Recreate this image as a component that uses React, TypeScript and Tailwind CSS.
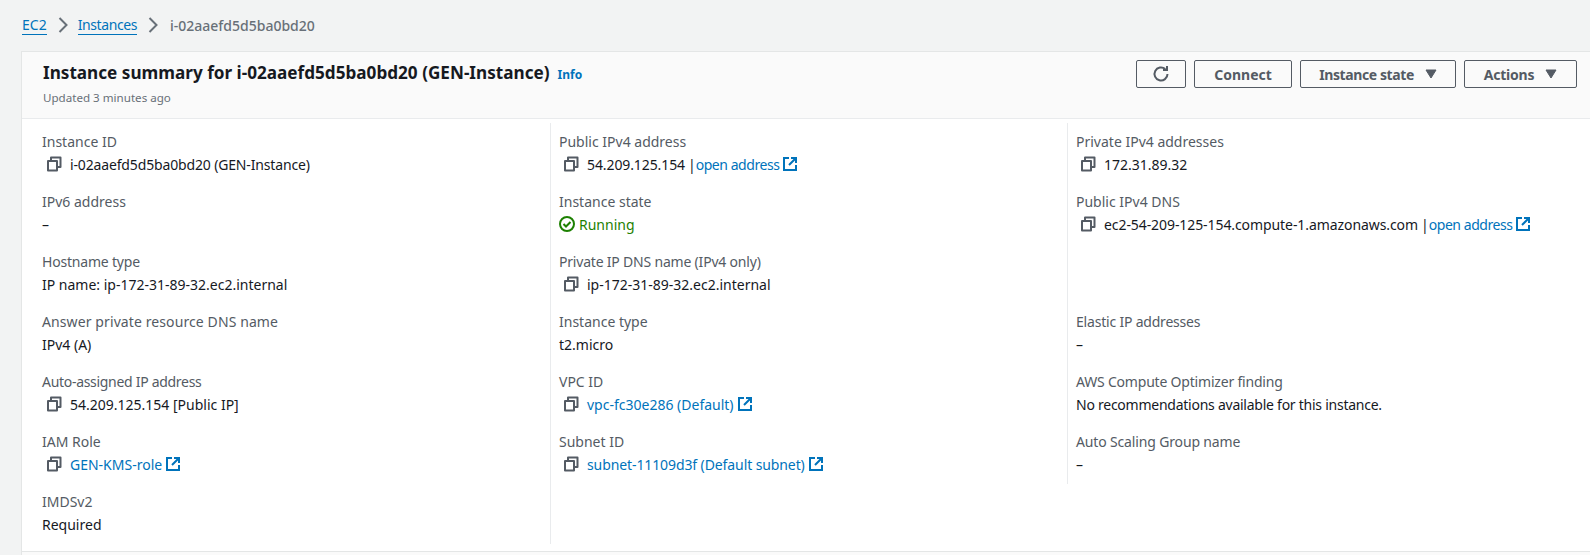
import React from "react";

const Copy = () => (
  <svg width="16" height="16" viewBox="0 0 16 16" fill="none" stroke="#545b64" strokeWidth="2" className="shrink-0">
    <path d="M2 5h9v9.500H2z" strokeLinejoin="round" />
    <path d="M5 4.500V1.500h9.500v9.500H11.500" strokeLinejoin="round" />
  </svg>
);

const Ext = () => (
  <svg width="14" height="14" viewBox="0 0 14 14" fill="none" stroke="#0073bb" strokeWidth="2" className="shrink-0 ml-[4px]">
    <path d="M6 1H1v12h12V8" />
    <path d="M8 1h5v5M13 1 6 8" />
  </svg>
);

const Tri = () => (
  <svg width="12" height="10" viewBox="0 0 12 10" className="shrink-0">
    <path d="M1 1h10L6 9z" fill="#545b64" stroke="#545b64" strokeLinejoin="round" />
  </svg>
);

const Check = () => (
  <svg width="16" height="16" viewBox="0 0 16 16" fill="none" stroke="#1d8102" strokeWidth="2" className="shrink-0">
    <circle cx="8" cy="8" r="7" />
    <path d="m4.500 8 2.500 2.500 4.500-4.500" />
  </svg>
);

const Chevron = () => (
  <svg width="10" height="16" viewBox="0 0 10 16" fill="none" stroke="#687078" strokeWidth="2" className="shrink-0">
    <path d="m1.500 1 7 7-7 7" />
  </svg>
);

type ValueProps = { copy?: boolean; className?: string; children: React.ReactNode };
const Value = ({ copy, className = "", children }: ValueProps) => (
  <div className={`flex items-center h-[22px] whitespace-nowrap ${copy ? "pl-[4px]" : ""} ${className}`}>
    {copy && <span className="mr-[8px] flex"><Copy /></span>}
    {children}
  </div>
);

type FieldProps = { label: string; labelClass?: string; children?: React.ReactNode };
const Field = ({ label, labelClass = "", children }: FieldProps) => (
  <div className="h-[60px] pt-[1px]">
    <div className={`h-[22px] leading-[22px] text-[#545b64] ${labelClass}`}>{label}</div>
    {children}
  </div>
);

const A = ({ children, className = "" }: { children: React.ReactNode; className?: string }) => (
  <span className={`text-[#0073bb] ${className}`}>{children}</span>
);

const Btn = ({ children, className }: { children: React.ReactNode; className: string }) => (
  <button className={`h-[28px] border border-[#545b64] rounded-[2px] text-[#545b64] font-bold flex items-center justify-center ${className}`}>
    {children}
  </button>
);

export default function App() {
  return (
    <div className="w-[1590px] h-[555px] overflow-hidden bg-[#f2f3f3] text-[14px] text-[#16191f] font-['Noto_Sans',sans-serif]">
      <nav className="flex items-center h-[51px] pl-[22px] pb-[1px]">
        <span className="text-[#0073bb] border-b border-[#0073bb] leading-[18px]">EC2</span>
        <span className="ml-[11px] mr-[10px] flex"><Chevron /></span>
        <span className="text-[#0073bb] border-b border-[#0073bb] leading-[18px] tracking-[-0.4px]">Instances</span>
        <span className="ml-[11px] mr-[12px] flex"><Chevron /></span>
        <span className="text-[#687078] font-medium">i-02aaefd5d5ba0bd20</span>
      </nav>
      <section className="ml-[21px] h-[504px] bg-[#fafafa] border-l border-t border-[#e4e6e6]">
        <header className="h-[67px] bg-[#fafafa] border-b border-[#e9ebed] flex justify-between pl-[21px] pr-[13px]">
          <div className="pt-[9px]">
            <div className="flex items-baseline">
              <h1 className="text-[17.15px] font-bold leading-[24px] text-[#16191f]">Instance summary for i-02aaefd5d5ba0bd20 (GEN-Instance)</h1>
              <span className="ml-[8px] text-[12px] font-bold text-[#0073bb]">Info</span>
            </div>
            <div className="text-[11.6px] leading-[18px] text-[#687078] mt-[4px]">Updated 3 minutes ago</div>
          </div>
          <div className="flex gap-[8px] pt-[8px]">
            <Btn className="w-[50px]">
              <svg width="18" height="18" viewBox="0 0 18 18" fill="none" stroke="#545b64" strokeWidth="2">
                <path d="M15.500 9a6.500 6.500 0 1 1-2.200-4.900" />
                <path d="M15 1v4h-4" />
              </svg>
            </Btn>
            <Btn className="w-[98px]">Connect</Btn>
            <Btn className="w-[156px] gap-[11px]"><span className="tracking-[-0.4px]">Instance state</span> <Tri /></Btn>
            <Btn className="w-[113px] gap-[11px]"><span className="tracking-[-0.2px]">Actions</span> <Tri /></Btn>
          </div>
        </header>
        <div className="grid grid-cols-[529px_517px_1fr] pt-[4px] h-[433px] bg-white border-b border-[#e4e6e6]">
          <div className="pl-[20px] pt-[7px] border-r border-[#e9ebed] h-[421px]">
            <Field label="Instance ID"><Value copy className="tracking-[-0.15px]">i-02aaefd5d5ba0bd20 (GEN-Instance)</Value></Field>
            <Field label="IPv6 address"><Value>–</Value></Field>
            <Field label="Hostname type" labelClass="tracking-[-0.2px]"><Value>IP name: ip-172-31-89-32.ec2.internal</Value></Field>
            <Field label="Answer private resource DNS name" labelClass="tracking-[0.1px]"><Value>IPv4 (A)</Value></Field>
            <Field label="Auto-assigned IP address" labelClass="tracking-[-0.3px]"><Value copy>54.209.125.154 [Public IP]</Value></Field>
            <Field label="IAM Role"><Value copy><A>GEN-KMS-role</A><Ext /></Value></Field>
            <Field label="IMDSv2"><Value>Required</Value></Field>
          </div>
          <div className="pl-[8px] pt-[7px] border-r border-[#e9ebed] h-[361px]">
            <Field label="Public IPv4 address"><Value copy><span className="tracking-[-0.1px]">54.209.125.154</span><span className="ml-[3px]">|</span><A className="tracking-[-0.45px]">open address</A><Ext /></Value></Field>
            <Field label="Instance state">
              <Value><span className="mr-[4px] flex"><Check /></span><span className="text-[#1d8102]">Running</span></Value>
            </Field>
            <Field label="Private IP DNS name (IPv4 only)" labelClass="tracking-[-0.2px]"><Value copy>ip-172-31-89-32.ec2.internal</Value></Field>
            <Field label="Instance type"><Value>t2.micro</Value></Field>
            <Field label="VPC ID"><Value copy><A>vpc-fc30e286 (Default)</A><Ext /></Value></Field>
            <Field label="Subnet ID"><Value copy><A className="tracking-[-0.1px]">subnet-11109d3f (Default subnet)</A><Ext /></Value></Field>
          </div>
          <div className="pl-[8px] pt-[7px]">
            <Field label="Private IPv4 addresses"><Value copy>172.31.89.32</Value></Field>
            <Field label="Public IPv4 DNS"><Value copy><span className="tracking-[-0.08px]">ec2-54-209-125-154.compute-1.amazonaws.com</span><span className="ml-[3px]">|</span><A className="tracking-[-0.45px]">open address</A><Ext /></Value></Field>
            <Field label="" />
            <Field label="Elastic IP addresses" labelClass="tracking-[-0.2px]"><Value>–</Value></Field>
            <Field label="AWS Compute Optimizer finding" labelClass="tracking-[-0.2px]"><Value className="tracking-[-0.25px]">No recommendations available for this instance.</Value></Field>
            <Field label="Auto Scaling Group name" labelClass="tracking-[-0.15px]"><Value>–</Value></Field>
          </div>
        </div>
      </section>
    </div>
  );
}
